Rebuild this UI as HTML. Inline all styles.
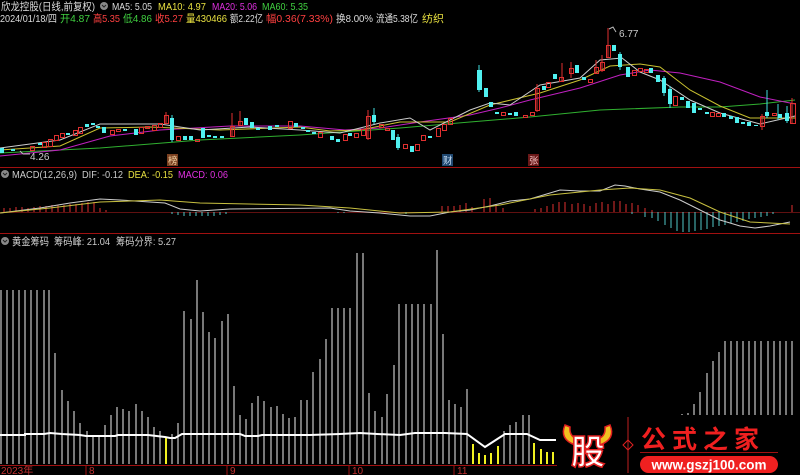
<!DOCTYPE html>
<html><head><meta charset="utf-8"><style>
html,body{margin:0;padding:0;background:#000;width:800px;height:475px;overflow:hidden}
svg{display:block}
text{font-family:"Liberation Sans","Noto Sans CJK SC",sans-serif}
</style></head><body>
<svg width="800" height="475" viewBox="0 0 800 475" xmlns="http://www.w3.org/2000/svg">
<rect width="800" height="475" fill="#000"/>
<!-- header -->
<g font-size="10.5" lengthAdjust="spacingAndGlyphs">
<text x="1" y="10" fill="#ddd" textLength="94" lengthAdjust="spacingAndGlyphs">欣龙控股(日线,前复权)</text>
<text x="112" y="10" fill="#ddd" textLength="40" lengthAdjust="spacingAndGlyphs">MA5: 5.05</text>
<text x="158" y="10" fill="#e8e040" textLength="48" lengthAdjust="spacingAndGlyphs">MA10: 4.97</text>
<text x="212" y="10" fill="#e030e0" textLength="45" lengthAdjust="spacingAndGlyphs">MA20: 5.06</text>
<text x="262" y="10" fill="#40d040" textLength="46" lengthAdjust="spacingAndGlyphs">MA60: 5.35</text>
<text x="0" y="22" fill="#ddd" textLength="57" lengthAdjust="spacingAndGlyphs">2024/01/18/四</text>
<text x="60" y="22" fill="#40d040" textLength="30" lengthAdjust="spacingAndGlyphs">开4.87</text>
<text x="93" y="22" fill="#ff4040" textLength="27" lengthAdjust="spacingAndGlyphs">高5.35</text>
<text x="123" y="22" fill="#40d040" textLength="29" lengthAdjust="spacingAndGlyphs">低4.86</text>
<text x="155" y="22" fill="#ff4040" textLength="28" lengthAdjust="spacingAndGlyphs">收5.27</text>
<text x="186" y="22" fill="#e8e040" textLength="41" lengthAdjust="spacingAndGlyphs">量430466</text>
<text x="230" y="22" fill="#ddd" textLength="33" lengthAdjust="spacingAndGlyphs">额2.22亿</text>
<text x="266" y="22" fill="#ff4040" textLength="67" lengthAdjust="spacingAndGlyphs">幅0.36(7.33%)</text>
<text x="336" y="22" fill="#ddd" textLength="37" lengthAdjust="spacingAndGlyphs">换8.00%</text>
<text x="376" y="22" fill="#ddd" textLength="42" lengthAdjust="spacingAndGlyphs">流通5.38亿</text>
<text x="422" y="22" fill="#e8e040" textLength="22" lengthAdjust="spacingAndGlyphs">纺织</text>
</g>
<circle cx="104" cy="6" r="4" fill="#888"/><path d="M102 5l2 2 2-2" stroke="#222" fill="none"/>
<!-- separators -->
<path d="M0 167.5H800M0 233.5H800" stroke="#a01010"/>
<!-- MA lines -->
<polyline fill="none" stroke="#30b030" stroke-width="1" points="0,153 100,148 200,140 300,135 400,128 470,122 530,117 600,110 680,107 720,107 760,104 795,100"/>
<polyline fill="none" stroke="#c020c0" stroke-width="1" points="0,156 60,150 110,136 160,130 230,126 300,126 345,130 380,128 420,122 470,115 500,108 530,100 580,88 620,75 650,70 680,73 720,82 760,97 795,104"/>
<polyline fill="none" stroke="#c8c030" stroke-width="1" points="0,150 60,146 100,128 150,127 220,130 300,127 330,131 360,130 400,122 450,122 490,105 540,93 580,80 610,66 640,64 660,67 690,90 720,106 750,118 795,118"/>
<polyline fill="none" stroke="#ccc" stroke-width="1" points="0,148 60,140 100,124 160,124 200,130 250,127 300,130 340,133 380,123 410,118 430,130 450,120 470,110 490,103 510,105 540,85 580,78 600,60 622,58 640,72 660,80 690,100 720,113 760,124 795,116"/>
<!-- candle wicks -->
<path stroke="#e03030" d="M368 110V140M240 111V126M232 113V136M596 60V73M608 28V57M562 63V81M166 112V124M537 84V112M762 114V130M792 98V124M602 55V72M571 62V78"/>
<path stroke="#40e0e0" d="M172 115V142M374 108V124M479 65V92M767 90V118M620 52V70M664 76V96M670 86V108M398 134V150M778 104V120M787 106V123"/>
<!-- red hollow candles -->
<g fill="none" stroke="#e03030">
<rect x="30.5" y="146.5" width="4" height="4"/><rect x="42.5" y="142.5" width="4" height="5"/><rect x="48.5" y="139.5" width="4" height="7"/><rect x="54.5" y="135.5" width="4" height="5"/><rect x="60.5" y="133.5" width="4" height="4"/><rect x="73.5" y="130.5" width="4" height="5"/><rect x="78.5" y="127.5" width="4" height="6"/><rect x="110.5" y="130.5" width="4" height="4"/><rect x="116.5" y="129.5" width="4" height="2"/><rect x="139.5" y="127.5" width="4" height="6"/><rect x="145.5" y="126.5" width="4" height="2"/><rect x="152.5" y="125.5" width="4" height="5"/><rect x="158.5" y="123.5" width="4" height="4"/><rect x="164.5" y="115.5" width="4" height="8"/><rect x="176.5" y="136.5" width="4" height="4"/><rect x="195.5" y="139.5" width="4" height="2"/><rect x="230.5" y="126.5" width="4" height="10"/><rect x="238.5" y="121.5" width="4" height="4"/><rect x="288.5" y="121.5" width="4" height="7"/><rect x="318.5" y="132.5" width="4" height="5"/><rect x="343.5" y="134.5" width="4" height="6"/><rect x="354.5" y="133.5" width="4" height="4"/><rect x="361.5" y="129.5" width="4" height="6"/><rect x="366.5" y="116.5" width="4" height="22"/><rect x="379.5" y="124.5" width="4" height="3"/><rect x="385.5" y="128.5" width="4" height="2"/>
<rect x="403.5" y="144.5" width="4" height="4"/><rect x="415.5" y="144.5" width="4" height="6"/><rect x="421.5" y="135.5" width="4" height="5"/><rect x="436.5" y="128.5" width="4" height="8"/><rect x="442.5" y="124.5" width="4" height="6"/><rect x="448.5" y="118.5" width="4" height="6"/>
<rect x="501.5" y="112.5" width="4" height="3"/><rect x="523.5" y="115.5" width="4" height="2"/><rect x="530.5" y="112.5" width="4" height="3"/><rect x="535.5" y="88.5" width="4" height="22"/><rect x="546.5" y="82.5" width="4" height="5"/><rect x="559.5" y="77.5" width="4" height="4"/><rect x="569.5" y="68.5" width="4" height="5"/><rect x="588.5" y="79.5" width="4" height="3"/><rect x="594.5" y="67.5" width="4" height="6"/><rect x="600.5" y="62.5" width="4" height="8"/><rect x="606.5" y="45.5" width="4" height="12"/><rect x="632.5" y="70.5" width="4" height="5"/><rect x="638.5" y="68.5" width="4" height="3"/><rect x="644.5" y="69.5" width="4" height="3"/><rect x="673.5" y="96.5" width="4" height="9"/><rect x="710.5" y="112.5" width="4" height="4"/><rect x="716.5" y="113.5" width="4" height="3"/><rect x="760.5" y="116.5" width="4" height="10"/><rect x="772.5" y="113.5" width="4" height="2"/><rect x="790.5" y="103.5" width="5" height="20"/>
</g>
<!-- cyan filled candles -->
<g fill="#50f0f0">
<rect x="0" y="148" width="4" height="5"/><rect x="11" y="149" width="4" height="2"/><rect x="38" y="143" width="4" height="2"/><rect x="66" y="133" width="4" height="2"/><rect x="85" y="124" width="4" height="3"/><rect x="91" y="123" width="4" height="2"/><rect x="96" y="126" width="4" height="2"/><rect x="102" y="127" width="4" height="6"/><rect x="123" y="129" width="4" height="2"/><rect x="134" y="129" width="4" height="6"/><rect x="170" y="118" width="4" height="22"/><rect x="183" y="136" width="4" height="4"/><rect x="189" y="136" width="4" height="4"/><rect x="201" y="128" width="4" height="10"/><rect x="207" y="135" width="4" height="2"/><rect x="213" y="136" width="4" height="2"/><rect x="220" y="136" width="4" height="2"/><rect x="244" y="118" width="4" height="7"/><rect x="250" y="122" width="4" height="6"/><rect x="256" y="128" width="4" height="2"/><rect x="268" y="126" width="4" height="4"/><rect x="275" y="125" width="4" height="2"/><rect x="294" y="123" width="4" height="4"/><rect x="301" y="127" width="4" height="2"/><rect x="306" y="130" width="4" height="2"/><rect x="312" y="132" width="4" height="2"/><rect x="330" y="136" width="4" height="4"/><rect x="336" y="139" width="4" height="3"/><rect x="348" y="133" width="4" height="3"/><rect x="372" y="115" width="4" height="7"/><rect x="391" y="130" width="4" height="10"/><rect x="396" y="137" width="4" height="11"/>
<rect x="410" y="146" width="4" height="6"/><rect x="428" y="136" width="4" height="2"/><rect x="477" y="70" width="5" height="20"/><rect x="484" y="88" width="4" height="9"/><rect x="489" y="102" width="4" height="5"/><rect x="495" y="112" width="4" height="2"/><rect x="508" y="113" width="4" height="2"/><rect x="514" y="112" width="4" height="4"/><rect x="542" y="86" width="4" height="4"/><rect x="553" y="74" width="4" height="5"/><rect x="575" y="65" width="4" height="8"/><rect x="582" y="77" width="4" height="3"/><rect x="612" y="45" width="4" height="6"/><rect x="618" y="54" width="4" height="13"/><rect x="626" y="67" width="4" height="10"/><rect x="649" y="68" width="4" height="5"/><rect x="656" y="75" width="4" height="7"/><rect x="662" y="78" width="4" height="15"/><rect x="668" y="89" width="4" height="15"/><rect x="680" y="97" width="4" height="3"/><rect x="686" y="101" width="4" height="7"/><rect x="692" y="103" width="4" height="10"/><rect x="698" y="108" width="4" height="2"/><rect x="705" y="112" width="4" height="2"/><rect x="722" y="113" width="4" height="4"/><rect x="729" y="116" width="4" height="3"/><rect x="735" y="117" width="4" height="6"/><rect x="741" y="122" width="4" height="2"/><rect x="747" y="122" width="4" height="4"/><rect x="754" y="125" width="4" height="1"/><rect x="765" y="112" width="4" height="4"/><rect x="778" y="114" width="4" height="4"/><rect x="785" y="113" width="4" height="8"/>
</g>
<!-- price labels -->
<path d="M609 29l4-2 3 5" stroke="#bbb" fill="none"/>
<text x="619" y="37" font-size="10" fill="#ccc">6.77</text>
<path d="M20 151l3 3M23 154H30" stroke="#bbb" fill="none"/>
<text x="30" y="160" font-size="10" fill="#ccc">4.26</text>
<rect x="167" y="154" width="11" height="12" fill="#7a4020"/><text x="168" y="164" font-size="9.5" fill="#f0d0a0">榜</text>
<rect x="442" y="154" width="11" height="12" fill="#204870"/><text x="443" y="164" font-size="9.5" fill="#c0d8f0">财</text>
<rect x="528" y="154" width="11" height="12" fill="#6a1818"/><text x="529" y="164" font-size="9.5" fill="#f0c0c0">张</text>
<!-- MACD header -->
<circle cx="5" cy="174" r="4" fill="#888"/><path d="M3 173l2 2 2-2" stroke="#222" fill="none"/>
<g font-size="10.5">
<text x="12" y="178" fill="#ccc" textLength="65" lengthAdjust="spacingAndGlyphs">MACD(12,26,9)</text>
<text x="82" y="178" fill="#ccc" textLength="41" lengthAdjust="spacingAndGlyphs">DIF: -0.12</text>
<text x="128" y="178" fill="#e8e040" textLength="45" lengthAdjust="spacingAndGlyphs">DEA: -0.15</text>
<text x="178" y="178" fill="#e030e0" textLength="50" lengthAdjust="spacingAndGlyphs">MACD: 0.06</text>
</g>
<path d="M0 212.5H800" stroke="#601010"/>
<!-- MACD hist -->
<path stroke="#e03030" d="M4 212V208M10 212V208M16 212V207M22 212V207M28 212V208M34 212V207M40 212V206M46 212V206M52 212V205M58 212V205M64 212V205M70 212V204M76 212V204M82 212V203M88 212V202M94 212V202M100 212V208M106 212V210M442 212V206M448 212V206M454 212V206M460 212V205M466 212V203M472 212V207M484 212V199M490 212V198M496 212V204M503 212V208M535 212V209M541 212V208M547 212V206M553 212V204M559 212V202M565 212V202M572 212V204M578 212V203M584 212V204M590 212V206M596 212V203M602 212V202M608 212V204M614 212V201M620 212V201M626 212V204M632 212V203M638 212V205M645 212V208M652 212V210M792 212V205"/>
<path stroke="#50c8c8" d="M172 212V214M178 212V215M184 212V216M190 212V216M196 212V216M202 212V216M208 212V216M214 212V216M220 212V215M226 212V214M338 212V213M344 212V213M372 212V213M406 212V214M632 212V214M645 212V217M652 212V218M658 212V221M665 212V225M671 212V228M677 212V231M683 212V232M689 212V232M695 212V231M701 212V230M707 212V229M713 212V227M719 212V226M725 212V225M731 212V223M737 212V222M743 212V221M749 212V219M755 212V218M761 212V217M767 212V216M773 212V214"/>
<polyline fill="none" stroke="#ccc" points="0,213 40,208 70,203 100,199 120,200 165,203 180,209 200,211 230,209 330,208 350,211 380,213 410,216 430,216 450,212 470,210 490,206 510,201 530,199 560,190 580,191 600,191 615,185 625,186 640,189 660,192 680,200 700,210 720,220 740,226 755,228 770,226 790,222"/>
<polyline fill="none" stroke="#c8c040" points="0,213 50,208 100,202 160,200 200,203 300,205 350,208 400,213 450,212 500,205 550,195 600,190 630,188 660,190 690,198 720,212 750,222 790,224"/>
<!-- chip header -->
<circle cx="5" cy="241" r="4" fill="#888"/><path d="M3 240l2 2 2-2" stroke="#222" fill="none"/>
<g font-size="10.5" fill="#ccc">
<text x="12" y="245" textLength="37" lengthAdjust="spacingAndGlyphs">黄金筹码</text>
<text x="54" y="245" textLength="56" lengthAdjust="spacingAndGlyphs">筹码峰: 21.04</text>
<text x="116" y="245" textLength="60" lengthAdjust="spacingAndGlyphs">筹码分界: 5.27</text>
</g>
<!-- chip bars -->
<path stroke="#c8c8c8" stroke-width="1.2" d="M1 290V464M7 290V464M13 290V464M19 290V464M25 290V464M31 290V464M37 290V464M44 290V464M49 290V464M55 353V464M62 390V464M68 401V464M74 411V464M80 423V464M87 431V464M93 436V464M99 435V464M105 425V464M111 415V464M117 407V464M123 409V464M129 411V464M136 404V464M142 411V464M148 417V464M154 427V464M160 431V464M172 434V464M178 423V464M184 311V464M191 319V464M197 280V464M203 312V464M209 332V464M215 338V464M222 321V464M228 314V464M234 386V464M240 415V464M246 419V464M252 403V464M258 396V464M264 401V464M271 407V464M277 406V464M283 414V464M289 418V464M295 417V464M301 400V464M307 400V464M313 372V464M320 359V464M326 339V464M332 308V464M338 308V464M344 308V464M350 308V464M357 253V464M363 253V464M369 393V464M375 411V464M382 417V464M387 394V464M394 365V464M399 304V464M406 304V464M412 304V464M418 304V464M424 304V464M431 304V464M437 250V464M443 334V464M449 400V464M455 404V464M461 407V464M467 389V464M504 431V464M510 425V464M516 422V464M523 415V464M529 415V464M682 414V464M688 413V464M694 404V464M700 392V464M707 373V464M713 361V464M719 352V464M725 341V464M731 341V464M737 341V464M743 341V464M749 341V464M755 341V464M761 341V464M768 341V464M774 341V464M780 341V464M786 341V464M792 341V464"/>
<path stroke="#f0f020" stroke-width="2" d="M166 437V464M473 444V464M479 453V464M485 455V464M491 453V464M498 446V464M534 443V464M541 449V464M547 452V464M553 452V464"/>
<polyline fill="none" stroke="#fff" stroke-width="2" points="0,435 25,435 25,434 44,434 50,433 62,434 80,435 86,436 115,436 118,435 148,435 165,437 170,438 175,438 182,434 240,434 245,436 258,436 262,435 310,435 340,434 360,433 377,434 400,435 415,433 445,433 467,434 485,447 505,434 527,434 540,440 556,440"/>
<!-- time axis -->
<path d="M0 465.5H800" stroke="#a01010"/>
<path stroke="#a01010" d="M86 465V475M227 465V475M349 465V475M454 465V475"/>
<text y="474" font-size="10" fill="#c03030"><tspan x="1">2023年</tspan><tspan x="89">8</tspan><tspan x="230">9</tspan><tspan x="352">10</tspan><tspan x="457">11</tspan></text>
<!-- logo -->
<rect x="557" y="415" width="243" height="60" fill="#000"/>
<path d="M565 425 q-6 14 10 20 l2-6 q-8-3-7-12z" fill="#f0c020" stroke="#e02020" stroke-width="1.5"/>
<path d="M610 425 q6 14-10 20 l-2-6 q8-3 7-12z" fill="#f0c020" stroke="#e02020" stroke-width="1.5"/>
<text x="571" y="464" font-size="34" font-weight="bold" fill="#fff" stroke="#e02020" stroke-width="1.5" font-family="Noto Sans CJK SC,sans-serif">股</text>
<path d="M628 417V473" stroke="#c02020"/>
<path d="M628 440l5 5-5 5-5-5z" fill="none" stroke="#e02020"/>
<text x="641" y="448" font-size="25" font-weight="bold" fill="#f02020" letter-spacing="6" font-family="Noto Serif CJK SC,serif">公式之家</text>
<path d="M640 452.5H778" stroke="#a01010"/>
<rect x="640" y="456" width="138" height="17" rx="8.5" fill="#f02020"/>
<text x="709" y="469.5" font-size="13.5" font-weight="bold" fill="#fff" text-anchor="middle">www.gszj100.com</text>
</svg>
</body></html>
